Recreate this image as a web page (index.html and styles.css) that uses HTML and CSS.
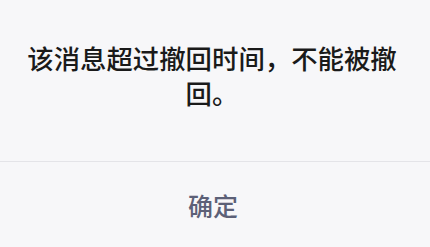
FILE: index.html
```html
<!DOCTYPE html>
<html lang="zh-CN">
<head>
<meta charset="utf-8">
<link rel="stylesheet" href="styles.css">
</head>
<body>
<div class="dialog">
  <div class="message">
    <p class="text">该消息超过撤回时间，不能被撤回。</p>
  </div>
  <div class="divider"></div>
  <div class="actions">
    <button class="confirm">确定</button>
  </div>
</div>
</body>
</html>
```
FILE: styles.css
```css
html, body {
  margin: 0;
  padding: 0;
  background: #f7f7f9;
}
.dialog {
  width: 430px;
  height: 247px;
  display: flex;
  flex-direction: column;
  font-family: "Noto Sans CJK SC", "Noto Sans", sans-serif;
}
.message {
  height: 161px;
  box-sizing: border-box;
  padding: 40px 26px 0 20px;
}
.text {
  margin: 0;
  font-size: 26.4px;
  line-height: 35px;
  color: #1a1a1a;
  text-align: center;
  font-weight: 500;
}
.divider {
  height: 1px;
  background: #e4e4e8;
}
.actions {
  flex: 1;
  display: flex;
  align-items: center;
  justify-content: center;
}
.confirm {
  border: 0;
  background: transparent;
  font-family: inherit;
  font-size: 25px;
  color: #5c6077;
  padding: 0 4px 0 0;
  font-weight: 500;
}
```
